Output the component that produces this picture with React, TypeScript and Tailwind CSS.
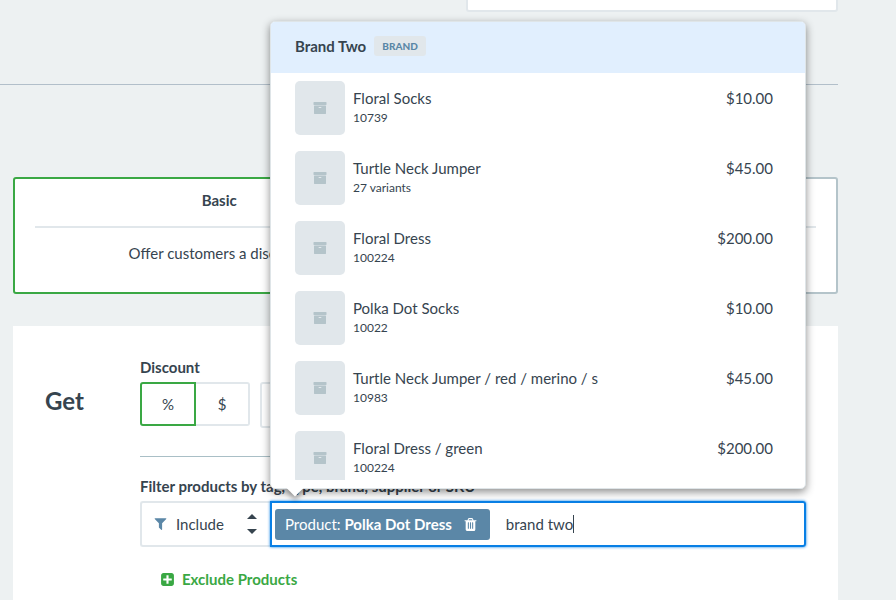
import { useState } from "react";

const PATHS = {
  archive:
    "M1088 832q0-26-19-45t-45-19h-256q-26 0-45 19t-19 45 19 45 45 19h256q26 0 45-19t19-45zm576-192v960q0 26-19 45t-45 19h-1408q-26 0-45-19t-19-45v-960q0-26 19-45t45-19h1408q26 0 45 19t19 45zm64-448v256q0 26-19 45t-45 19h-1536q-26 0-45-19t-19-45v-256q0-26 19-45t45-19h1536q26 0 45 19t19 45z",
  trash:
    "M704 1376v-704q0-14-9-23t-23-9h-64q-14 0-23 9t-9 23v704q0 14 9 23t23 9h64q14 0 23-9t9-23zm256 0v-704q0-14-9-23t-23-9h-64q-14 0-23 9t-9 23v704q0 14 9 23t23 9h64q14 0 23-9t9-23zm256 0v-704q0-14-9-23t-23-9h-64q-14 0-23 9t-9 23v704q0 14 9 23t23 9h64q14 0 23-9t9-23zm-544-992h448l-48-117q-7-9-17-11h-317q-10 2-17 11zm928 32v64q0 14-9 23t-23 9h-96v948q0 83-47 143.5t-113 60.5h-832q-66 0-113-58.500t-47-141.500v-952h-96q-14 0-23-9t-9-23v-64q0-14 9-23t23-9h309l70-167q15-37 54-63t79-26h320q40 0 79 26t54 63l70 167h309q14 0 23 9t9 23z",
  filter:
    "M1595 295q17 41-14 70l-493 493v742q0 42-39 59-13 5-25 5-27 0-45-19l-256-256q-19-19-19-45v-486l-493-493q-31-29-14-70 17-39 59-39h1280q42 0 59 39z",
  plusSquare:
    "M1408 960v-128q0-26-19-45t-45-19h-320v-320q0-26-19-45t-45-19h-128q-26 0-45 19t-19 45v320h-320q-26 0-45 19t-19 45v128q0 26 19 45t45 19h320v320q0 26 19 45t45 19h128q26 0 45-19t19-45v-320h320q26 0 45-19t19-45zm256-544v960q0 119-84.500 203.500t-203.500 84.500h-960q-119 0-203.500-84.500t-84.500-203.500v-960q0-119 84.500-203.500t203.500-84.500h960q119 0 203.500 84.500t84.500 203.500z",
};

function Icon({ name, className }: { name: keyof typeof PATHS; className: string }) {
  return (
    <svg viewBox="0 0 1792 1792" fill="currentColor" aria-hidden="true" className={className}>
      <path d={PATHS[name]} />
    </svg>
  );
}

const PRODUCTS = [
  { name: "Floral Socks", detail: "10739", price: "$10.00" },
  { name: "Turtle Neck Jumper", detail: "27 variants", price: "$45.00" },
  { name: "Floral Dress", detail: "100224", price: "$200.00" },
  { name: "Polka Dot Socks", detail: "10022", price: "$10.00" },
  { name: "Turtle Neck Jumper / red / merino / s", detail: "10983", price: "$45.00" },
  { name: "Floral Dress / green", detail: "100224", price: "$200.00" },
];

function PromotionType({ title, text, selected }: { title: string; text: string; selected?: boolean }) {
  return (
    <button
      type="button"
      aria-pressed={!!selected}
      className={`flex h-[117px] flex-1 flex-col rounded-[3px] border-2 bg-white px-5 pt-[11px] ${
        selected ? "border-[#3aa844]" : "border-[#b4c4ca]"
      }`}
    >
      <span className="w-full border-b-2 border-[#e1e7eb] pb-4 font-bold leading-5">{title}</span>
      <span className="mt-[15px] w-full leading-5">{text}</span>
    </button>
  );
}

function Suggestions() {
  return (
    <div className="absolute -inset-x-[2px] bottom-full z-10 mb-[14px] rounded-[5px] border border-[#dfe5e8] bg-white pb-2 shadow-[0_3px_8px_rgba(0,0,0,0.45)]">
      <button type="button" className="flex h-[51px] w-full items-center gap-2 rounded-t-[4px] bg-[#e1effe] px-6 pb-[3px] text-left">
        <span className="font-bold leading-5">Brand Two</span>
        <span className="rounded-[3px] bg-[#e1e7eb] px-2 text-[10px] font-black leading-5 text-[#5b87a7]">BRAND</span>
      </button>
      <ul className="max-h-[407px] overflow-y-auto [scrollbar-width:none]">
        {PRODUCTS.map((product) => (
          <li key={product.name}>
            <button type="button" className="flex h-[70px] w-full gap-2 py-2 pl-6 pr-8 text-left">
              <span className="flex h-full w-[50px] items-center justify-center rounded-[5px] bg-[#e1e7eb]">
                <Icon name="archive" className="size-[14px] text-[#b4c4ca]" />
              </span>
              <span className="flex flex-1 flex-col gap-px pt-[7px]">
                <span className="leading-5">{product.name}</span>
                <span className="text-xs leading-[18px]">{product.detail}</span>
              </span>
              <span className="pt-[7px] leading-5">{product.price}</span>
            </button>
          </li>
        ))}
      </ul>
      <span className="absolute left-[18px] top-full size-3 -translate-y-1/2 rotate-45 bg-white shadow-[3px_3px_5px_rgba(0,0,0,0.3)]" />
      <span className="absolute inset-x-2 bottom-0 h-2 bg-white" />
    </div>
  );
}

export default function App() {
  const [query, setQuery] = useState("brand two");

  return (
    <main className="flex min-h-screen flex-col bg-[#edf1f2] pr-[58px] font-[Lato,sans-serif] text-[15px] text-[#36444f]">
      <div className="flex justify-end">
        <input
          aria-label="Promotion name"
          className="-mt-8 h-11 w-[372px] rounded-[3px] border-2 border-[#e1e7eb] bg-white px-3"
        />
      </div>
      <hr className="mt-[72px] border-[#b2bfca]" />

      <div className="ml-[13px] mt-[92px] flex">
        <PromotionType title="Basic" text="Offer customers a discount." selected />
        <PromotionType title="Advanced" text="Create a promotion with specific conditions" />
      </div>

      <section className="ml-[13px] mt-8 flex flex-1 bg-white px-8 pt-[31px]">
        <h2 className="w-[95px] pt-7 text-2xl font-bold leading-8">Get</h2>
        <div className="min-w-0 flex-1">
          <label htmlFor="discount" className="block font-bold leading-5">
            Discount
          </label>
          <div className="mt-[5px] flex h-[46px] items-start">
            <button type="button" className="h-11 w-14 rounded-l-[3px] border-2 border-[#3aa844]">
              %
            </button>
            <button type="button" className="h-11 w-[54px] rounded-r-[3px] border-2 border-l-0 border-[#e1e7eb]">
              $
            </button>
            <input id="discount" className="ml-[10px] h-[46px] w-40 rounded-[3px] border-2 border-[#e1e7eb] px-3" />
          </div>
          <hr className="mt-7 border-[#a9bfc6]" />

          <label htmlFor="product-filter" className="mt-[19px] block font-bold leading-5">
            Filter products by tag, type, brand, supplier or SKU
          </label>
          <div className="mt-[5px] flex h-[46px]">
            <div className="grid w-[130px] items-center rounded-l-[3px] border-2 border-r-0 border-[#e1e7eb]">
              <select
                aria-label="Filter mode"
                className="col-start-1 row-start-1 h-full w-full appearance-none pl-[34px] outline-none"
              >
                <option>Include</option>
                <option>Exclude</option>
              </select>
              <span className="pointer-events-none col-start-1 row-start-1 flex items-center justify-between pl-[11px] pr-[13px]">
                <Icon name="filter" className="mb-[2px] size-[15px] text-[#5b87a7]" />
                <svg viewBox="0 0 10 22" aria-hidden="true" className="h-[22px] w-[10px] fill-[#36444f]">
                  <path d="M0 6 L5 1 L10 6Z" />
                  <path d="M0 16 L5 21 L10 16Z" />
                </svg>
              </span>
            </div>
            <div className="relative flex min-w-0 flex-1 items-center rounded-r-[3px] border-2 border-[#087fe5] pl-[3px] shadow-[0_0_3px_#087fe5]">
              <Suggestions />
              <span className="flex h-[31px] items-center rounded-[3px] bg-[#5b87a7] pl-[10px] pr-3 text-white">
                <span className="whitespace-nowrap">
                  Product: <b>Polka Dot Dress</b>
                </span>
                <button type="button" aria-label="Remove Polka Dot Dress" className="ml-[11px]">
                  <Icon name="trash" className="size-[15px]" />
                </button>
              </span>
              <input
                id="product-filter"
                value={query}
                onChange={(event) => setQuery(event.target.value)}
                className="ml-4 min-w-1 caret-transparent outline-none [field-sizing:content]"
              />
              <span className="h-[18px] w-px bg-[#36444f]" />
            </div>
          </div>

          <button type="button" className="ml-5 mt-[22px] flex items-center gap-[7px] font-bold leading-5 text-[#3aa844]">
            <Icon name="plusSquare" className="size-[15px]" />
            Exclude Products
          </button>
        </div>
      </section>
    </main>
  );
}
